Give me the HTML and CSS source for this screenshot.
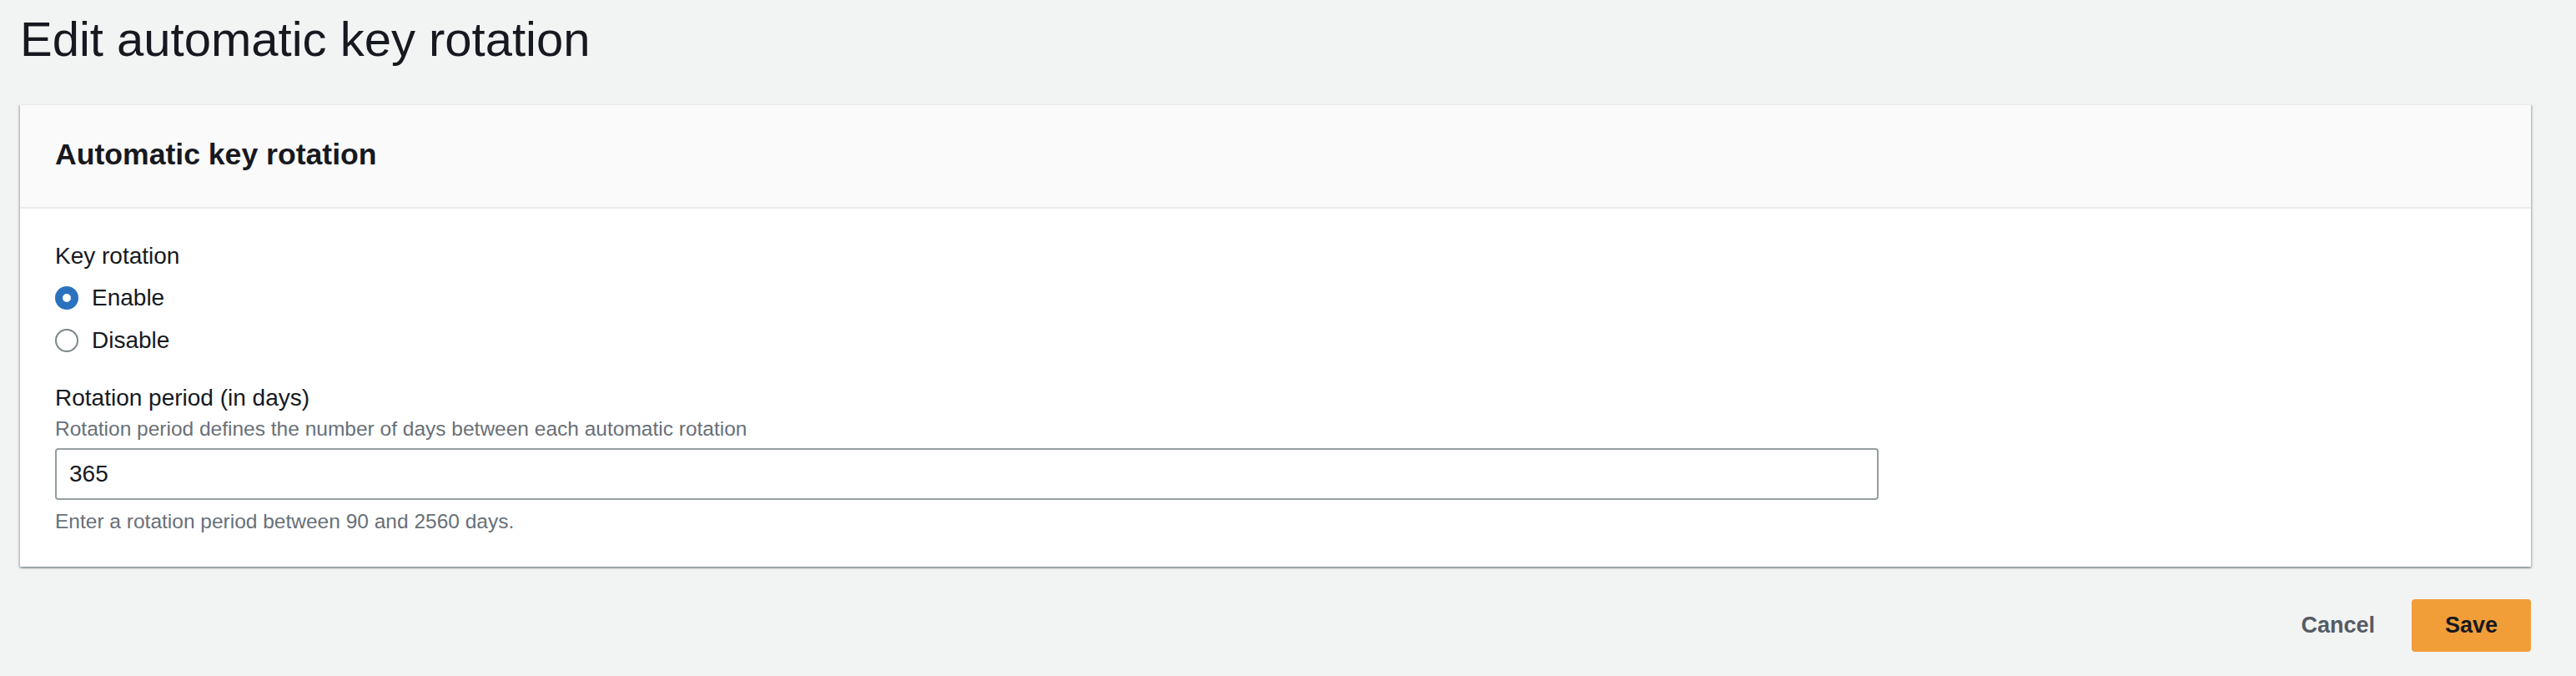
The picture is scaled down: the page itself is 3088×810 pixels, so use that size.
FILE: index.html
```html
<!DOCTYPE html>
<html lang="en">
<head>
<meta charset="utf-8">
<title>Edit automatic key rotation</title>
<link rel="stylesheet" href="styles.css">
</head>
<body>
<main class="page">
  <h1 class="page-title">Edit automatic key rotation</h1>
  <section class="card">
    <header class="card-header">
      <h2 class="card-title">Automatic key rotation</h2>
    </header>
    <div class="card-body">
      <div class="field">
        <div class="field-label">Key rotation</div>
        <div class="radio-group">
          <label class="radio-row">
            <span class="radio radio-checked"></span>
            <span class="radio-text">Enable</span>
          </label>
          <label class="radio-row">
            <span class="radio"></span>
            <span class="radio-text">Disable</span>
          </label>
        </div>
      </div>
      <div class="field field-period">
        <div class="field-label">Rotation period (in days)</div>
        <div class="field-desc">Rotation period defines the number of days between each automatic rotation</div>
        <input class="text-input" type="text" value="365">
        <div class="field-hint">Enter a rotation period between 90 and 2560 days.</div>
      </div>
    </div>
  </section>
  <div class="actions">
    <button class="btn btn-link" type="button">Cancel</button>
    <button class="btn btn-primary" type="button">Save</button>
  </div>
</main>
</body>
</html>
```
FILE: styles.css
```css
html, body {
  margin: 0;
  padding: 0;
  background: #f2f3f3;
  height: 100%;
}
body {
  font-family: "Liberation Sans", Arial, sans-serif;
  color: #16191f;
}
.page {
  padding: 13px 54px 0 24px;
}
.page-title {
  margin: 0 0 44px 0;
  font-size: 58px;
  line-height: 68px;
  font-weight: 400;
  color: #16191f;
}
.card {
  background: #ffffff;
  border-top: 1px solid #eaeded;
  box-shadow: 0 2px 2px rgba(0, 28, 36, 0.3), 2px 1px 2px rgba(0, 28, 36, 0.15), -2px 1px 2px rgba(0, 28, 36, 0.15);
}
.card-header {
  background: #fafafa;
  padding: 37px 42px 41px;
  border-bottom: 2px solid #eaeded;
}
.card-title {
  margin: 0;
  font-size: 35.6px;
  line-height: 44px;
  font-weight: 700;
}
.card-body {
  padding: 37px 42px 37px;
}
.field-label {
  font-size: 28px;
  line-height: 40px;
}
.radio-group {
  display: flex;
  flex-direction: column;
  gap: 11px;
  margin-top: 10px;
}
.radio-row {
  display: flex;
  align-items: center;
  gap: 16px;
  height: 40px;
  font-size: 28px;
  line-height: 40px;
}
.radio {
  box-sizing: border-box;
  width: 28px;
  height: 28px;
  border-radius: 50%;
  border: 2px solid #7d8689;
  background: #ffffff;
  flex: none;
}
.radio-checked {
  border: 9px solid #2a72bd;
}
.field-period {
  margin-top: 29px;
}
.field-desc {
  font-size: 24.5px;
  line-height: 34px;
  color: #687078;
}
.text-input {
  display: block;
  box-sizing: border-box;
  width: 2186px;
  height: 62px;
  margin-top: 6px;
  padding: 0 15px;
  border: 2px solid #959ea1;
  border-radius: 4px;
  font-family: "Liberation Sans", Arial, sans-serif;
  font-size: 28px;
  color: #16191f;
  background: #ffffff;
  outline: none;
}
.field-hint {
  margin-top: 9px;
  font-size: 24.5px;
  line-height: 34px;
  color: #687078;
}
.actions {
  display: flex;
  justify-content: flex-end;
  align-items: center;
  gap: 44px;
  margin-top: 39px;
}
.btn {
  font-family: "Liberation Sans", Arial, sans-serif;
  font-size: 27px;
  font-weight: 700;
  border: none;
  cursor: pointer;
}
.btn-link {
  background: transparent;
  color: #545b64;
  padding: 0;
}
.btn-primary {
  background: #f19e39;
  color: #16191f;
  height: 63px;
  padding: 0 40px;
  border-radius: 4px;
}
```
